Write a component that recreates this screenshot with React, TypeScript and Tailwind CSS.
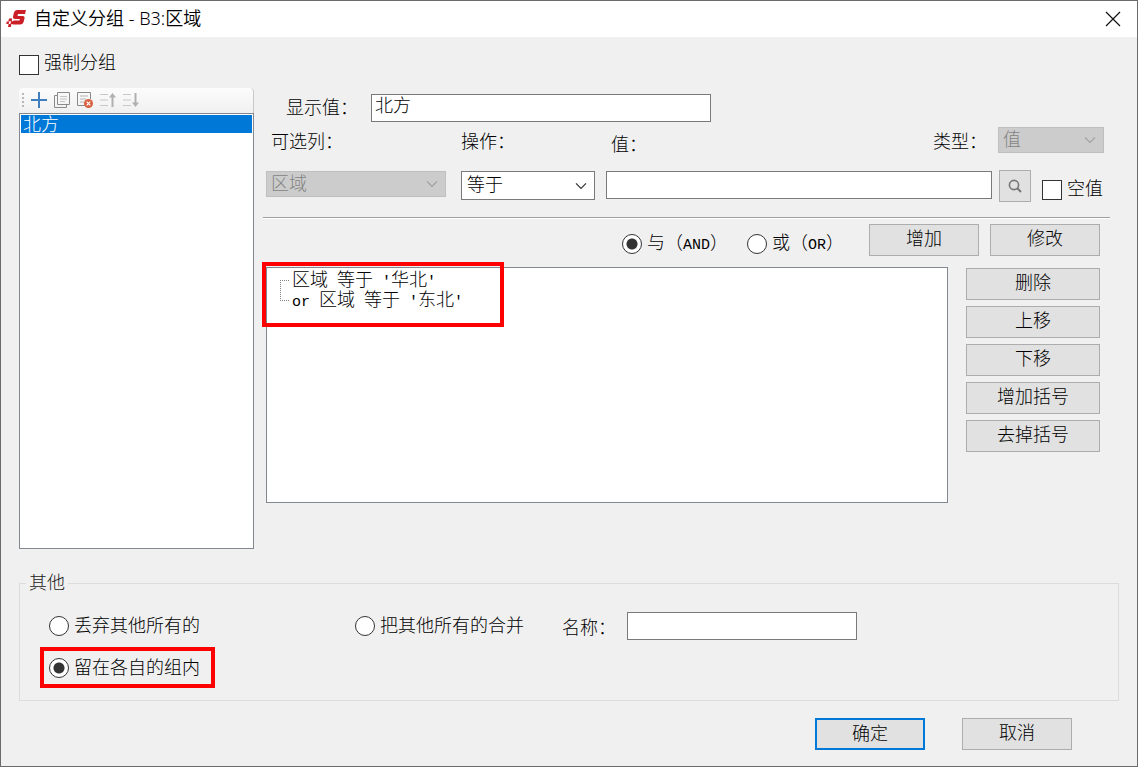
import React, { useState } from "react";

const mono = "font-['Liberation_Mono'] font-normal text-[15px] leading-4";

const conditions = [
  { join: "", field: "区域", op: "等于", value: "华北" },
  { join: "or ", field: "区域", op: "等于", value: "东北" },
];

const sideActions = ["删除", "上移", "下移", "增加括号", "去掉括号"];

function Logo() {
  return (
    <svg width="20" height="18" viewBox="0 0 20 18" fill="#cb1f27" aria-hidden="true">
      <path d="M20 0 19 4H12L11.5 6H16.6Q19 6.2 18.5 8.6L17.6 12Q17 14.4 14.6 14.4H6.4L7.4 10.6H13.4L13.9 9H9.2Q6.5 8.8 7.1 6.2L7.7 3.4Q8.5 0 11.6 0Z" />
      <path d="M3 8.5H6.2L5.6 11.2H2.4ZM5 11.2H8L7.4 14H4.4ZM.8 11.4H3.2L2.6 14H.2ZM2.6 14H5.4L4.8 17H2Z" />
    </svg>
  );
}

function Chevron({ className }: { className: string }) {
  return (
    <svg className={`pointer-events-none absolute ${className}`} width="12" height="8" viewBox="0 0 12 8" fill="none" stroke="currentColor" strokeWidth="1.2">
      <path d="M1 1.3 6 6.3 11 1.3" />
    </svg>
  );
}

function ToolIcon({ children, label }: { children: React.ReactNode; label: string }) {
  return (
    <button type="button" aria-label={label} className="h-5 w-[23px] flex items-center justify-center">
      <svg width="18" height="18" viewBox="0 0 18 18" fill="none">{children}</svg>
    </button>
  );
}

function PushButton({ children, className = "" }: { children: React.ReactNode; className?: string }) {
  return (
    <button type="button" className={`h-8 shrink-0 border border-[#adadad] bg-[#e1e1e1] flex items-center justify-center pb-1.5 ${className}`}>
      {children}
    </button>
  );
}

function Radio({ name, checked, onChange, children }: { name: string; checked: boolean; onChange: () => void; children: React.ReactNode }) {
  return (
    <label className="flex items-center gap-[5px] whitespace-nowrap">
      <input
        type="radio"
        name={name}
        checked={checked}
        onChange={onChange}
        className="appearance-none size-5 rounded-full border border-[#333] bg-white checked:bg-[radial-gradient(circle,#333_5px,white_6px)]"
      />
      <span className="pb-1">{children}</span>
    </label>
  );
}

export default function App() {
  const [join, setJoin] = useState("and");
  const [other, setOther] = useState("keep");

  return (
    <div className="min-h-screen flex flex-col border border-[#6b6b6b] bg-[#f0f0f0] text-black font-light text-[18px] leading-5 font-['Noto_Sans_CJK_SC',sans-serif]">
      <header className="h-9 shrink-0 flex items-center bg-white pl-[5px] pr-4">
        <Logo />
        <h1 className="ml-2 pb-0.5 flex-1 font-[350] font-['Noto_Sans','Noto_Sans_CJK_SC',sans-serif]">自定义分组 - B3:区域</h1>
        <button type="button" aria-label="关闭">
          <svg width="16" height="16" viewBox="0 0 16 16" stroke="#111" strokeWidth="1.2">
            <path d="M1 1 15 15M15 1 1 15" />
          </svg>
        </button>
      </header>

      <main className="px-[18px] pt-3.5">
        <label className="inline-flex h-6 items-center gap-[5px]">
          <input type="checkbox" className="appearance-none size-5 mt-1 border border-[#333] bg-white" />
          <span className="pb-1">强制分组</span>
        </label>

        <div className="mt-[11px] flex gap-[9px]">
          {/* Group list */}
          <section className="w-[235px] shrink-0 flex flex-col">
            <div className="h-[25px] flex items-center rounded-t border-r border-[#c8c8c8] bg-linear-to-b from-[#fcfcfc] to-[#f0f0f0] pl-[3px] pb-0.5">
              <span className="mr-[3px] h-[14px] border-l-2 border-dotted border-[#b8b8b8]" />
              <ToolIcon label="新增">
                <path d="M9 1V17M1 9H17" stroke="#3f7fbf" strokeWidth="2" />
              </ToolIcon>
              <ToolIcon label="复制">
                <path d="M4.5 1.5H16.5V13.5H4.5ZM4 4.5H1.5V16.5H13.5V14" stroke="#8a8a8a" />
                <path d="M7 5.5H14M7 8H14M7 10.5H12" stroke="#c4c4c4" />
              </ToolIcon>
              <ToolIcon label="删除分组">
                <path d="M9 14.5H1.5V1.5H14.5V8" stroke="#8a8a8a" />
                <path d="M4 5H12M4 8H10M4 11H8" stroke="#b4b4b4" />
                <circle cx="12.5" cy="12.5" r="4.5" fill="#d9603f" />
                <path d="M10.7 10.7 14.3 14.3M14.3 10.7 10.7 14.3" stroke="white" strokeWidth="1.2" />
              </ToolIcon>
              <ToolIcon label="上移分组">
                <path d="M1 3.5H9M1 9H9M1 14.5H9" stroke="#c8c8c8" />
                <path d="M13.5 16V4" stroke="#b0b0b0" strokeWidth="2" />
                <path d="M10 6.5 13.5 2 17 6.5Z" fill="#b0b0b0" />
              </ToolIcon>
              <ToolIcon label="下移分组">
                <path d="M1 3.5H9M1 9H9M1 14.5H9" stroke="#c8c8c8" />
                <path d="M13.5 2V14" stroke="#b0b0b0" strokeWidth="2" />
                <path d="M10 11.5 13.5 16 17 11.5Z" fill="#b0b0b0" />
              </ToolIcon>
            </div>
            <ul className="h-[436px] border border-[#828790] bg-white p-px">
              <li className="h-[18px] bg-[#0078d7] pl-0.5 leading-4 text-white">北方</li>
            </ul>
          </section>

          {/* Condition editor */}
          <section className="min-w-0 flex-1 pt-1.5 pr-[9px]">
            <div className="flex items-center pl-[23px]">
              <label htmlFor="display" className="w-[85px] pb-1">显示值：</label>
              <input id="display" defaultValue="北方" className="h-7 w-[340px] border border-[#7a7a7a] bg-white pl-[3px] pb-2" />
            </div>

            <div className="mt-[5px] flex items-center pl-2">
              <label htmlFor="column" className="w-[190px]">可选列：</label>
              <label htmlFor="operator" className="w-[150px]">操作：</label>
              <label htmlFor="value" className="flex-1 pt-1.5">值：</label>
              <label htmlFor="type" className="w-[65px]">类型：</label>
              <div className="relative mr-1.5">
                <select id="type" disabled className="appearance-none h-[26px] w-[106px] border border-[#bfbfbf] bg-[#ccc] pl-1 pb-1 text-[#838383] opacity-100">
                  <option>值</option>
                </select>
                <Chevron className="right-2 top-[9px] text-[#a0a0a0]" />
              </div>
            </div>

            <div className="mt-[17px] flex items-start pl-[3px] pr-1.5">
              <div className="relative mt-px mr-[15px]">
                <select id="column" disabled className="appearance-none h-[26px] w-[180px] border border-[#bfbfbf] bg-[#ccc] pl-1 pb-1 text-[#838383] opacity-100">
                  <option>区域</option>
                </select>
                <Chevron className="right-2 top-[9px] text-[#a0a0a0]" />
              </div>
              <div className="relative mt-px mr-[11px]">
                <select id="operator" className="appearance-none h-[29px] w-[134px] border border-[#7a7a7a] bg-white pl-[5px] pb-1.5">
                  <option>等于</option>
                </select>
                <Chevron className="right-2 top-[11px] text-[#333]" />
              </div>
              <input id="value" className="mt-px mr-[7px] h-7 min-w-0 flex-1 border border-[#7a7a7a] bg-white px-1" />
              <button type="button" aria-label="查找" className="mr-[11px] size-8 flex items-center justify-center border border-[#adadad] bg-[#e1e1e1]">
                <svg width="14" height="14" viewBox="0 0 14 14" fill="none" stroke="#777" strokeWidth="1.6">
                  <circle cx="6" cy="6" r="4.6" />
                  <path d="M9.3 9.3 13 13" strokeWidth="2" />
                </svg>
              </button>
              <label className="mt-[6px] flex items-center gap-[5px] pr-px">
                <input type="checkbox" className="appearance-none size-5 mt-1 border border-[#333] bg-white" />
                <span className="pb-0.5">空值</span>
              </label>
            </div>

            <hr className="mt-[15px] h-0.5 border-0 border-t border-[#a0a0a0] bg-white" />

            <div className="mt-[5px] flex h-8 items-center justify-end pr-[10px]">
              <div className="mr-[25px] mt-2 flex gap-[19px]">
                <Radio name="join" checked={join === "and"} onChange={() => setJoin("and")}>
                  与（<span className={mono}>AND</span>）
                </Radio>
                <Radio name="join" checked={join === "or"} onChange={() => setJoin("or")}>
                  或（<span className={mono}>OR</span>）
                </Radio>
              </div>
              <PushButton className="mr-[11px] w-[110px]">增加</PushButton>
              <PushButton className="w-[110px]">修改</PushButton>
            </div>

            <div className="mt-[11px] flex items-start gap-[18px] pl-[3px] pr-[10px]">
              <div className="relative h-[236px] min-w-0 flex-1 border border-[#828790] bg-white pt-px pl-[13px]">
                <ul className="relative pl-3">
                  <span className="absolute left-0 top-[11px] h-[21px] w-[9px] border border-r-0 border-dotted border-[#808080]" />
                  {conditions.map((c) => (
                    <li key={c.value} className="h-5 leading-[18px] whitespace-pre">
                      <span className={mono}>{c.join}</span>
                      {c.field}
                      <span className={mono}> </span>
                      {c.op}
                      <span className={mono}> '</span>
                      {c.value}
                      <span className={mono}>'</span>
                    </li>
                  ))}
                </ul>
                <div className="pointer-events-none absolute -left-[5px] -top-[6px] h-[65px] w-[242px] border-4 border-[#ff0000]" />
              </div>
              <div className="mt-px flex w-[134px] flex-col gap-1.5">
                {sideActions.map((label) => (
                  <PushButton key={label}>{label}</PushButton>
                ))}
              </div>
            </div>
          </section>
        </div>

        {/* Remaining values */}
        <fieldset className="mt-6 h-[128px] border border-[#dcdcdc] pl-[29px]">
          <legend className="-ml-[23px] h-5 px-[3px] leading-4 text-[#222]">其他</legend>
          <div className="mt-[19px] flex items-center">
            <div className="w-[306px]">
              <Radio name="other" checked={other === "discard"} onChange={() => setOther("discard")}>丢弃其他所有的</Radio>
            </div>
            <div className="w-[207px]">
              <Radio name="other" checked={other === "merge"} onChange={() => setOther("merge")}>把其他所有的合并</Radio>
            </div>
            <label htmlFor="name" className="w-[65px]">名称：</label>
            <input id="name" className="h-7 w-[230px] border border-[#7a7a7a] bg-white px-1" />
          </div>
          <div className="-ml-[9px] mt-[7px] inline-flex h-[41px] w-[175px] items-center border-4 border-[#ff0000] pl-[5px]">
            <Radio name="other" checked={other === "keep"} onChange={() => setOther("keep")}>留在各自的组内</Radio>
          </div>
        </fieldset>
      </main>

      <footer className="mt-[17px] flex justify-end gap-[37px] pr-[65px]">
        <button type="button" className="h-8 w-[110px] border-2 border-[#0078d7] bg-[#e1e1e1] flex items-center justify-center pb-1">确定</button>
        <PushButton className="w-[110px]">取消</PushButton>
      </footer>
    </div>
  );
}
